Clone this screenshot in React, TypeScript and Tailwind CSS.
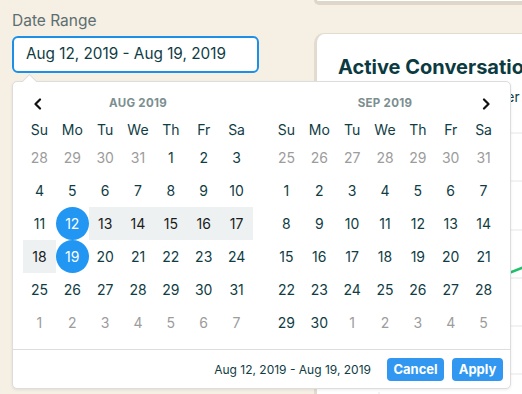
import React from 'react';

const teal = 'text-[#103c44]';

type Cell = { d: number; muted?: boolean; sel?: boolean; range?: boolean };

function buildMonth(prevDays: number[], count: number, nextDays: number[]): Cell[] {
  return [
    ...prevDays.map((d) => ({ d, muted: true })),
    ...Array.from({ length: count }, (_, i) => ({ d: i + 1 })),
    ...nextDays.map((d) => ({ d, muted: true })),
  ];
}

const aug = buildMonth([28, 29, 30, 31], 31, [1, 2, 3, 4, 5, 6, 7]).map((c) =>
  !c.muted && (c.d === 12 || c.d === 19)
    ? { ...c, sel: true }
    : !c.muted && c.d > 12 && c.d < 19
    ? { ...c, range: true }
    : c
);
const sep = buildMonth([25, 26, 27, 28, 29, 30, 31], 30, [1, 2, 3, 4, 5]);

const weekdays = ['Su', 'Mo', 'Tu', 'We', 'Th', 'Fr', 'Sa'];

function Chevron({ dir }: { dir: 'left' | 'right' }) {
  return (
    <svg width="10" height="12" viewBox="0 0 10 12" fill="none">
      <path
        d={dir === 'left' ? 'M7 1.5 L2.5 6 L7 10.5' : 'M3 1.5 L7.5 6 L3 10.5'}
        stroke="#111"
        strokeWidth="2.2"
        strokeLinecap="round"
        strokeLinejoin="round"
      />
    </svg>
  );
}

function Month({ title, cells, nav }: { title: string; cells: Cell[]; nav: 'left' | 'right' }) {
  return (
    <div className="w-[231px]">
      <div className="h-[27px] flex items-center relative">
        <div className="flex-1 text-center text-[11.5px] font-bold tracking-[0.3px] text-[#7c8e8f]">{title}</div>
        <div className={`absolute top-[8px] ${nav === 'left' ? 'left-[10px]' : 'right-[9px]'}`}>
          <Chevron dir={nav} />
        </div>
      </div>
      <div className="grid grid-cols-7 h-[24px] items-center">
        {weekdays.map((w) => (
          <div key={w} className={`text-center text-[14px] ${teal}`}>
            {w}
          </div>
        ))}
      </div>
      <div className="grid grid-cols-7">
        {cells.map((c, i) => (
          <div
            key={i}
            className={`h-[33px] flex items-center justify-center text-[14px] ${
              c.sel
                ? 'bg-[#2196f3] text-white rounded-full'
                : c.range
                ? 'bg-[#edf1f1] text-[#1c1c1c]'
                : c.muted
                ? 'text-[#9c9c9c]'
                : teal
            }`}
          >
            {c.d}
          </div>
        ))}
      </div>
    </div>
  );
}

export default function App() {
  return (
    <div
      className="w-[522px] h-[394px] bg-[#f5efe4] relative overflow-hidden flex"
      style={{ fontFamily: 'Inter, "Noto Sans", sans-serif' }}
    >
      <div className="w-[304px] shrink-0 pl-3 pt-[9px]">
        <div className="text-[15.5px] text-[#5c6e6f] h-[20px]">Date Range</div>
        <div className={`mt-[7px] w-[247px] h-[37px] border-2 border-[#1e8fe6] rounded-[6px] bg-white flex items-center pl-[12px] text-[15.3px] ${teal}`}>
          Aug 12, 2019 - Aug 19, 2019
        </div>
      </div>

      <div className="flex-1 ml-[10px] flex flex-col">
        <div className="h-[5px] bg-white border-b-[4px] border-l-[3px] border-[#ddd6c9] rounded-bl-[10px]" />
        <div className="mt-[28px] flex-1 bg-white border-l-[3px] border-t border-[#e2dbcf] rounded-tl-[10px] pl-[21px] pt-[18px] relative">
          <div className="text-[20px] font-bold text-[#0b3b41] whitespace-nowrap">Active Conversations</div>
          <div className={`mt-[5px] text-[13.5px] whitespace-nowrap ${teal}`}>Conversations per hour over time</div>
          <svg className="absolute left-[20px] top-[98px]" width="200" height="270" viewBox="0 0 200 270">
            {[0, 48, 97, 145, 193, 241].map((y) => (
              <line key={y} x1="0" y1={y + 1} x2="200" y2={y + 1} stroke="#e6e6e6" strokeWidth="1" />
            ))}
            <line x1="42" y1="260" x2="42" y2="270" stroke="#e6e6e6" />
            <path d="M150 146 L172 141 L190 134" stroke="#22c06b" strokeWidth="2.5" fill="none" />
          </svg>
        </div>
      </div>

      {/* date picker popover */}
      <div className="absolute left-[12px] top-[81px] w-[499px] h-[308px] bg-white border border-[#dddddd] rounded-[5px] shadow-[0_1px_3px_rgba(0,0,0,0.08)]">
        <div className="absolute -top-[6px] left-[11px] w-[11px] h-[11px] bg-white border-l border-t border-[#dddddd] rotate-45" />
        <div className="flex gap-[17px] px-[10px] pt-[8px] pb-[10px] border-b border-[#dddddd]">
          <Month title="AUG 2019" cells={aug} nav="left" />
          <Month title="SEP 2019" cells={sep} nav="right" />
        </div>
        <div className="h-[39px] flex items-center justify-end pr-[7px]">
          <span className={`text-[12px] ${teal} mr-[16px]`}>Aug 12, 2019 - Aug 19, 2019</span>
          <button className="h-[23px] w-[57px] rounded-[4px] bg-[#3197f0] text-white text-[13px] font-bold">Cancel</button>
          <button className="ml-[8px] h-[23px] w-[51px] rounded-[4px] bg-[#3197f0] text-white text-[13px] font-bold">Apply</button>
        </div>
      </div>
    </div>
  );
}
